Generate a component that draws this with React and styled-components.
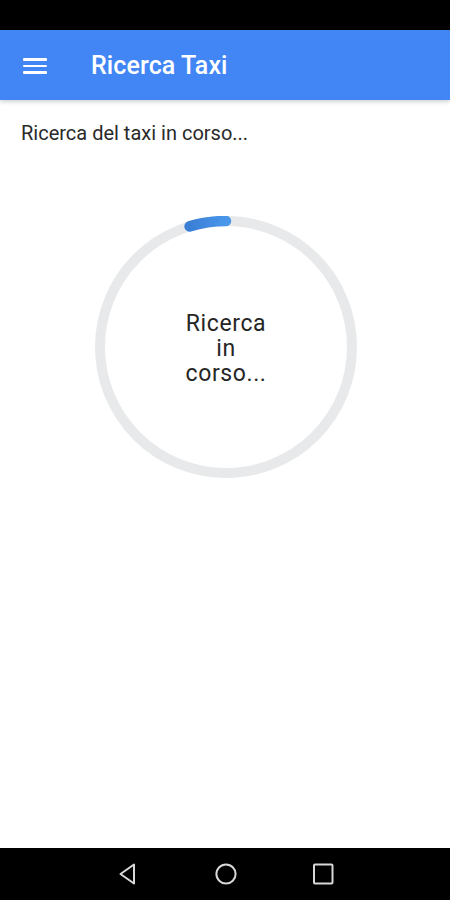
import React from "react";
import styled, { createGlobalStyle } from "styled-components";

const Global = createGlobalStyle`
  html, body { margin: 0; padding: 0; background: #ffffff; }
  body { font-family: Roboto, "Noto Sans", Arial, sans-serif; }
`;

const Screen = styled.div`
  width: 450px;
  height: 900px;
  display: flex;
  flex-direction: column;
  background: #ffffff;
  overflow: hidden;
`;

const StatusBar = styled.div`
  height: 30px;
  flex: none;
  background: #000000;
`;

const AppBar = styled.header`
  height: 70px;
  flex: none;
  display: flex;
  align-items: center;
  background: #4286f5;
  box-shadow: 0 2px 4px rgba(0, 0, 0, 0.18);
  position: relative;
  z-index: 1;
`;

const MenuButton = styled.div`
  width: 24px;
  margin-left: 23px;
  display: flex;
  flex-direction: column;
  gap: 4px;
  margin-top: 2px;
`;

const MenuLine = styled.span`
  display: block;
  height: 2.6px;
  background: #ffffff;
  border-radius: 1px;
`;

const Title = styled.h1`
  margin: 0 0 0 44px;
  font-family: Roboto, Arial, sans-serif;
  font-size: 25px;
  font-weight: 500;
  color: #ffffff;
  letter-spacing: 0.1px;
`;

const Content = styled.main`
  flex: 1;
  display: flex;
  flex-direction: column;
  align-items: center;
`;

const Subtitle = styled.p`
  align-self: stretch;
  margin: 20px 0 0 21px;
  font-size: 20px;
  line-height: 26px;
  color: #2a2a2a;
`;

const Spinner = styled.div`
  margin-top: 70px;
  margin-left: 2px;
  width: 262px;
  height: 262px;
  display: grid;
  place-items: center;
  & > * { grid-area: 1 / 1; }
`;

const SpinnerLabel = styled.div`
  display: flex;
  flex-direction: column;
  align-items: center;
  margin-top: 3px;
`;

const LabelLine = styled.span`
  font-size: 23px;
  line-height: 25px;
  letter-spacing: 0.6px;
  color: #262626;
`;

const NavBar = styled.nav`
  height: 52px;
  flex: none;
  background: #000000;
  display: flex;
  align-items: center;
  justify-content: center;
  gap: 73px;
  padding-left: 2px;
`;

const NavIcon = styled.svg`
  width: 24px;
  height: 24px;
  display: block;
`;

const polar = (cx, cy, r, deg) => {
  const a = (deg * Math.PI) / 180;
  return [cx + r * Math.sin(a), cy - r * Math.cos(a)];
};

export default function App() {
  const [x1, y1] = polar(131, 131, 126, -16.8);
  const [x2, y2] = polar(131, 131, 126, 0);
  return (
    <>
      <Global />
      <Screen>
        <StatusBar />
        <AppBar>
          <MenuButton>
            <MenuLine />
            <MenuLine />
            <MenuLine />
          </MenuButton>
          <Title>Ricerca Taxi</Title>
        </AppBar>
        <Content>
          <Subtitle>Ricerca del taxi in corso...</Subtitle>
          <Spinner>
            <svg width="262" height="262" viewBox="0 0 262 262">
              <defs>
                <linearGradient id="arcGrad" x1="0" y1="0" x2="1" y2="0">
                  <stop offset="0" stopColor="#3a7fd6" />
                  <stop offset="1" stopColor="#4a97ea" />
                </linearGradient>
              </defs>
              <circle cx="131" cy="131" r="126" fill="none" stroke="#e8e9ea" strokeWidth="10" />
              <path
                d={`M ${x1} ${y1} A 126 126 0 0 1 ${x2} ${y2}`}
                fill="none"
                stroke="url(#arcGrad)"
                strokeWidth="10.5"
                strokeLinecap="round"
              />
            </svg>
            <SpinnerLabel>
              <LabelLine>Ricerca</LabelLine>
              <LabelLine>in</LabelLine>
              <LabelLine>corso...</LabelLine>
            </SpinnerLabel>
          </Spinner>
        </Content>
        <NavBar>
          <NavIcon viewBox="0 0 24 24">
            <path d="M17 2.5 L17 21.5 L3.5 12 Z" fill="none" stroke="#d8d8d8" strokeWidth="2" strokeLinejoin="round" />
          </NavIcon>
          <NavIcon viewBox="0 0 24 24">
            <circle cx="12" cy="12" r="9.6" fill="none" stroke="#d8d8d8" strokeWidth="2" />
          </NavIcon>
          <NavIcon viewBox="0 0 24 24">
            <rect x="3" y="2.5" width="18.5" height="19" rx="1" fill="none" stroke="#d8d8d8" strokeWidth="2" />
          </NavIcon>
        </NavBar>
      </Screen>
    </>
  );
}
